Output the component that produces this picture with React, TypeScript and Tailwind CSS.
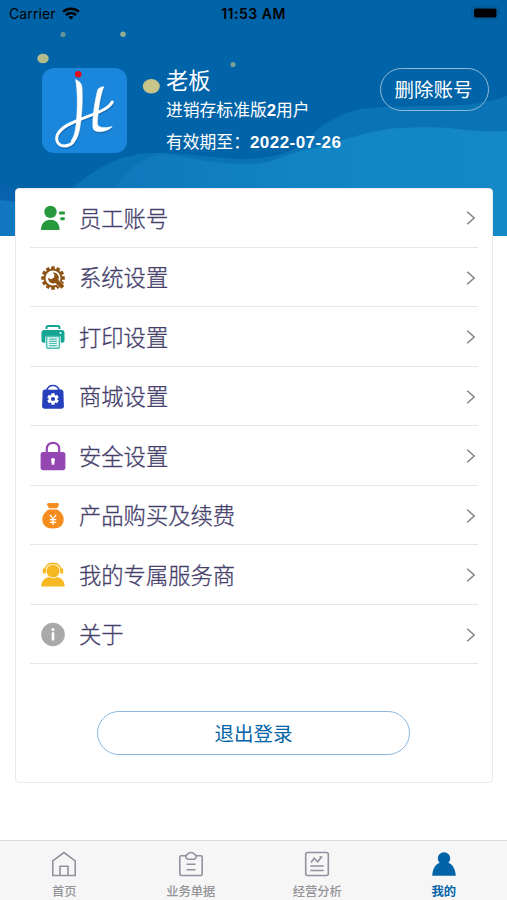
import type { ReactNode } from 'react';

function Wifi() {
  return (
    <svg width="18" height="13" viewBox="0 0 18 13" fill="none" stroke="#000" strokeWidth="2.5">
      <path d="M1 4.900C5.500 .7 12.500 .7 17 4.900" />
      <path d="M3.900 8.100c2.900-2.700 7.300-2.700 10.200 0" />
      <path d="M9 12.600 6.300 9.900c1.500-1.300 3.900-1.300 5.400 0z" fill="#000" stroke="none" />
    </svg>
  );
}

// drawn once as a shadow and once in white
function LogoMark() {
  return (
    <>
      <path d="M33.500 11.500c3.500 1.300 6 3.500 6.500 7.500.8 11 .3 26-1.800 39-1.200 8-3.200 13.500-6.700 17l-2.500-2c3-4 4.200-9 5-16 1.600-14 2-33-.5-45.500z" />
      <path d="M31 74c-4 5-13.500 5.500-15.800-.5-2.400-6.500 3.300-13.500 14.800-18.500 11-5 22-8.500 30-12.500 5-2.500 8.500-5 10.300-8.500" fill="none" strokeWidth="3" strokeLinecap="round" />
      <path d="M55.800 21.500c2-2.200 4-3 6-2.800-3.600 10-5.600 22-6.400 36.300-.2 4.700 6 5.700 14.800 3.500-3.500 5.300-18.500 8-19.300 1-.6-9 1.500-25 4.900-38z" />
    </>
  );
}

function Logo() {
  return (
    <svg className="h-[85px] w-[85px]" viewBox="0 0 85 85">
      <rect width="85" height="85" rx="12" fill="#1a86dc" />
      <g fill="#125f9f" stroke="#125f9f" strokeWidth=".5" opacity=".6" transform="translate(.5 1.500)">
        <LogoMark />
      </g>
      <g fill="#fff" stroke="#fff" strokeWidth=".5">
        <LogoMark />
      </g>
      <circle cx="36.200" cy="6.300" r="3.300" fill="#e50b16" />
    </svg>
  );
}

function StaffIcon() {
  return (
    <svg width="26" height="26" viewBox="0 0 26 26" fill="#25993b">
      <circle cx="10.500" cy="6.900" r="6.200" />
      <path d="M1 25c0-6 3.500-10.200 9.500-10.200S19.500 19 19.500 25z" />
      <rect x="19" y="6.500" width="6" height="2.900" rx="1" />
      <rect x="20.300" y="12.300" width="4.500" height="3" rx="1" />
    </svg>
  );
}

const teeth = [0, 30, 60, 90, 120, 150, 180, 210, 240, 270, 300, 330];

function SystemIcon() {
  return (
    <svg width="26" height="26" viewBox="0 0 26 26" fill="#8c5313">
      {teeth.map((a) => (
        <rect key={a} x="11.200" y="1.200" width="3.600" height="3.500" rx=".6" transform={`rotate(${a} 13 13)`} />
      ))}
      <circle cx="13" cy="13" r="8.500" fill="none" stroke="#8c5313" strokeWidth="1.900" />
      <path
        d="M12.800 7.600a5.400 5.400 0 0 1 5.700 7.500l5.800 6-2.700 2.700-6.100-5.700a5.400 5.400 0 0 1-7.400-5.300l2.900 1.500 3.100-1.700.3-3.200z"
        stroke="#fff"
        strokeWidth="1"
        paintOrder="stroke"
      />
    </svg>
  );
}

function PrintIcon() {
  return (
    <svg width="26" height="26" viewBox="0 0 26 26">
      <path d="M6.500 5V3.800c0-1 .8-1.700 1.700-1.700h9.600c1 0 1.700.8 1.700 1.700V5" fill="none" stroke="#15a594" strokeWidth="2" />
      <path d="M4 5.900h18c1.300 0 2.500 1 2.500 2.300v8.300c0 1.300-1 2.300-2.500 2.300h-1.300v-6.400H5.300v6.400H4c-1.300 0-2.500-1-2.500-2.300V8.200C1.500 6.900 2.700 5.900 4 5.900z" fill="#15a594" />
      <circle cx="20.500" cy="8.900" r="1" fill="#fff" />
      <path d="M6.600 12.400h12.800v10.400a1.500 1.500 0 0 1-1.500 1.500H8.100a1.500 1.500 0 0 1-1.500-1.500z" fill="#e4f7f5" stroke="#4fbfb3" strokeWidth="1.500" />
      <path d="M9.200 15.100h7.600M9.200 17.300h7.600M9.200 19.500h7.600M9.200 21.700h7.600" stroke="#4fbfb3" strokeWidth="1.200" />
    </svg>
  );
}

function ShopIcon() {
  return (
    <svg width="26" height="26" viewBox="0 0 26 26">
      <path d="M6.500 6.500C7.500 3.200 10 1.400 13 1.400s5.500 1.800 6.500 5.100" fill="none" stroke="#2640bd" strokeWidth="1.500" />
      <path d="M5 5.400h16c1.500 0 2.300 1 2.400 2.300l.5 14.500c0 1.500-.9 2.500-2.400 2.500h-17c-1.500 0-2.400-1-2.400-2.500l.5-14.500C2.700 6.400 3.500 5.400 5 5.400z" fill="#2640bd" />
      <path d="M8.800 5.600C9.500 3.700 11 2.900 13 2.900s3.500.8 4.200 2.700z" fill="#fff" />
      {teeth.filter((a) => a % 60 === 0).map((a) => (
        <rect key={a} x="11.300" y="9.300" width="3.400" height="3" rx=".6" fill="#fff" transform={`rotate(${a} 13 15)`} />
      ))}
      <circle cx="13" cy="15" r="3.200" fill="none" stroke="#fff" strokeWidth="2.200" />
    </svg>
  );
}

function LockIcon() {
  return (
    <svg width="26" height="30" viewBox="0 0 26 30">
      <path d="M6.800 12.500V7.800C6.800 4 9.500 1.800 13 1.800s6.200 2.200 6.200 6v4.700" fill="none" stroke="#9447b2" strokeWidth="2.200" />
      <rect x=".6" y="10.900" width="24.800" height="18.300" rx="2.600" fill="#9447b2" />
      <path d="M13 16.900a2 2 0 0 1 1.600 3.200l-.4 3.600h-2.400l-.4-3.600a2 2 0 0 1 1.600-3.200z" fill="#fff" />
    </svg>
  );
}

function MoneyIcon() {
  return (
    <svg width="26" height="28" viewBox="0 0 26 28" fill="#f58d1e">
      <path d="M7.500 1.400c1.800-.8 3.500.2 5.500-.3 2 .5 3.700-.5 5.500.3.800.5.500 1.300.1 2L17 6.200H9L7.400 3.400c-.4-.7-.7-1.500.1-2z" />
      <path d="M8.800 7.400h8.400c4.200 2.200 6.500 6.300 6.500 10.200 0 5.700-4 9-10.700 9s-10.700-3.300-10.700-9c0-3.900 2.300-8 6.500-10.200z" />
      <path d="M9.900 12.800l3.100 4 3.100-4M13 16.800v6.200M9.800 17.700h6.400M9.800 20.400h6.400" fill="none" stroke="#fff" strokeWidth="1.300" />
    </svg>
  );
}

function ServiceIcon() {
  return (
    <svg width="26" height="26" viewBox="0 0 26 26" fill="#f6b922">
      <path d="M4.700 9C4.700 4.500 8 1.400 13 1.400S21.300 4.500 21.300 9" fill="none" stroke="#f6b922" strokeWidth="1.600" />
      <rect x="2.800" y="6.400" width="3" height="5.200" rx="1.200" />
      <rect x="20.200" y="6.400" width="3" height="5.200" rx="1.200" />
      <path d="M13 3c4 0 6.500 2.400 6.500 5.800 0 4-2.900 6.700-6.500 6.700s-6.500-2.700-6.500-6.700C6.500 5.400 9 3 13 3z" />
      <path d="M1.300 24.600c0-5.200 2.700-8.600 7.700-9.600 2.400 1.700 5.600 1.700 8 0 5 1 7.700 4.400 7.700 9.600z" />
    </svg>
  );
}

function AboutIcon() {
  return (
    <svg width="26" height="26" viewBox="0 0 26 26">
      <circle cx="13" cy="12.500" r="11.800" fill="#a9a9a9" />
      <circle cx="13" cy="7.600" r="1.500" fill="#fff" />
      <rect x="11.700" y="10.300" width="2.600" height="8.300" rx=".6" fill="#fff" />
    </svg>
  );
}

const rows: { label: string; icon: ReactNode }[] = [
  { label: '员工账号', icon: <StaffIcon /> },
  { label: '系统设置', icon: <SystemIcon /> },
  { label: '打印设置', icon: <PrintIcon /> },
  { label: '商城设置', icon: <ShopIcon /> },
  { label: '安全设置', icon: <LockIcon /> },
  { label: '产品购买及续费', icon: <MoneyIcon /> },
  { label: '我的专属服务商', icon: <ServiceIcon /> },
  { label: '关于', icon: <AboutIcon /> },
];

const tabs: { label: string; active?: boolean; icon: ReactNode }[] = [
  {
    label: '首页',
    icon: <path d="M1.800 9.800 13 1.500l11.200 8.300v14.700H1.800zM9 24.500v-9.200h8v9.200" />,
  },
  {
    label: '业务单据',
    icon: (
      <>
        <path d="M8 4.700H3.200a1.400 1.400 0 0 0-1.400 1.400v17a1.400 1.400 0 0 0 1.400 1.400h19.600a1.400 1.400 0 0 0 1.400-1.400v-17a1.400 1.400 0 0 0-1.400-1.400H18" />
        <path d="M9.800 3.200c1.200-2.300 5.200-2.300 6.400 0l2 1.300v2l-1.700 1.700h-7L7.800 6.500v-2zM8.500 13.300h9M8.500 18.800h9" />
      </>
    ),
  },
  {
    label: '经营分析',
    icon: (
      <>
        <rect x="1.700" y="1.500" width="22.600" height="23" rx="2" />
        <path d="m7 11.500 3.200-4.200 3.400 3.500 4.200-5M15.500 6h2.900M6.300 15h13.400M6.300 19.500h13.400" />
      </>
    ),
  },
  {
    label: '我的',
    active: true,
    icon: (
      <path
        d="M13 1.200a6.200 6.200 0 0 1 6.200 6.200c0 1.800-.8 3.300-1.800 4.400 4.300 1.800 6.900 6.200 7.400 12.900H1.200c.5-6.700 3.100-11.100 7.400-12.900a6.200 6.200 0 0 1-1.800-4.400A6.200 6.200 0 0 1 13 1.200z"
        fill="#0264a8"
        stroke="none"
      />
    ),
  },
];

function Backdrop() {
  return (
    <svg className="absolute inset-x-0 top-0 h-[236px] w-full" viewBox="0 0 507 236" preserveAspectRatio="none">
      <defs>
        <linearGradient id="near" x1="0" y1="0" x2="1" y2="0">
          <stop offset="0" stopColor="#0e78bb" />
          <stop offset=".5" stopColor="#1284c4" />
          <stop offset="1" stopColor="#1489c6" />
        </linearGradient>
      </defs>
      <rect width="507" height="236" fill="#0264a8" />
      <path d="M0 184c10 2 20 7 30 18v34H0z" fill="#0962ae" />
      <path d="M0 200c10 1 20 2 30 4v32H0z" fill="#1177c0" />
      <path
        d="M70 190c25-20 45-36 85-37 40-1 70 9 105 5 30-3 40-12 50-22 15-14 30-22 50-27 25-3 45-2 70-3 30 0 55-2 77-10v94z"
        fill="#0973b5"
      />
      <path
        d="M113 190c12-18 26-31 48-36 25 2 50 11 92 10 20 0 35-12 58-15 10-3 18-5 29-8 22-7 40-12 60-13 18-1 34-1 50 0 20 3 38 4 57 3v105H113z"
        fill="url(#near)"
      />
      <g fill="#c8c48a">
        <ellipse cx="43" cy="58.500" rx="5.700" ry="4.800" opacity=".9" />
        <ellipse cx="151.300" cy="86.300" rx="8.500" ry="7.200" />
        <circle cx="123" cy="34.300" r="2.700" opacity=".75" />
        <circle cx="63" cy="34.500" r="2.600" opacity=".5" />
        <circle cx="233" cy="64.500" r="2.600" opacity=".6" />
      </g>
    </svg>
  );
}

export default function App() {
  return (
    <div className="relative flex h-[900px] w-[507px] flex-col overflow-hidden bg-white font-['Liberation_Sans','Noto_Sans_CJK_SC',sans-serif]">
      <Backdrop />

      <header className="relative h-[188px] shrink-0">
        <div className="grid h-[26px] grid-cols-3 items-center font-['Inter',sans-serif] text-[14px] text-black">
          <div className="flex items-center gap-[6px] pl-[9px]">
            <span className="tracking-[0.1px]">Carrier</span>
            <Wifi />
          </div>
          <span className="text-center font-semibold tracking-[0.5px]">11:53 AM</span>
          <svg className="ml-auto mr-[6px]" width="30" height="14" viewBox="0 0 30 14">
            <rect x="1" y=".8" width="26" height="12.400" rx="3.500" fill="none" stroke="#02568f" strokeWidth="1.200" />
            <rect x="3" y="2.500" width="22.500" height="9" rx="1.700" />
            <path d="M28.300 4.800c1.500.6 1.500 3.500 0 4.200z" fill="#02568f" />
          </svg>
        </div>

        <div className="flex items-start pl-[42px] pr-[18px] pt-[41.500px] text-white">
          <Logo />
          <div className="ml-[39px] flex flex-1 flex-col whitespace-nowrap">
            <h1 className="text-[22.300px] leading-[28px]">老板</h1>
            <p className="text-[16.800px] leading-[30px]">
              进销存标准版<b>2</b>用户
            </p>
            <p className="text-[16.800px] leading-[33px]">
              有效期至：
              <b className="text-[17px] tracking-[0.45px]">2022-07-26</b>
            </p>
          </div>
          <button className="h-[43px] w-[109px] shrink-0 rounded-full border border-[#8fbbdc] pr-[2px] pt-[3px] text-[19.500px]">
            删除账号
          </button>
        </div>
      </header>

      <main className="relative ml-[15px] mr-[14px] h-[595px] shrink-0 rounded-[4px] border border-[#e9e9ec] bg-white px-[14px]">
        <ul className="-mt-px">
          {rows.map((row) => (
            <li key={row.label} className="flex h-[59.500px] items-center border-b-[1.500px] border-[#e6e6ea] pl-[10px] pr-[2px] pt-[1.500px]">
              <span className="flex w-[26px] justify-center">{row.icon}</span>
              <span className="ml-[13px] flex-1 pt-[3px] text-[22.300px] leading-[30px] font-light text-[#45406b] [-webkit-text-stroke:0.3px_#45406b]">
                {row.label}
              </span>
              <svg width="10" height="14" viewBox="0 0 10 14" fill="none" stroke="#808087" strokeWidth="1.500">
                <path d="m1.200.8 7 6.200-7 6.200" />
              </svg>
            </li>
          ))}
        </ul>
        <button className="ml-[67px] mt-[47px] block h-[44px] w-[313px] rounded-full border border-[#8db8dc] pt-[3px] text-[19.500px] text-[#0264a8]">
          退出登录
        </button>
      </main>

      <nav className="relative mt-auto grid h-[60px] grid-cols-4 border-t border-[#dcdcde] bg-[#f6f6f7] pl-px">
        {tabs.map((tab) => (
          <div key={tab.label} className="flex flex-col items-center pt-[10px]">
            <svg width="26" height="26" viewBox="0 0 26 26" fill="none" stroke="#92929f" strokeWidth="1.600">
              {tab.icon}
            </svg>
            <span
              className={
                tab.active
                  ? 'mt-[5.500px] text-[12.300px] leading-[18px] font-bold text-[#0264a8]'
                  : 'mt-[5.500px] text-[12.300px] leading-[18px] font-medium text-[#949499]'
              }
            >
              {tab.label}
            </span>
          </div>
        ))}
      </nav>
    </div>
  );
}
